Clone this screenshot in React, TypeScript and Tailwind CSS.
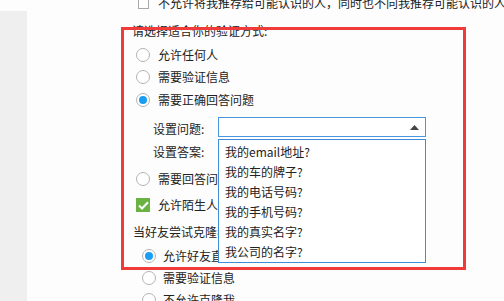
import React from "react";

function Radio({ checked = false }: { checked?: boolean }) {
  return (
    <span className="relative flex h-[14px] w-[14px] shrink-0 items-center justify-center rounded-full border border-[#b4b4b4] bg-white">
      {checked && <span className="h-[8px] w-[8px] rounded-full bg-[#1a9df2]" />}
    </span>
  );
}

function GreenCheck() {
  return (
    <span className="flex h-[14px] w-[14px] shrink-0 items-center justify-center bg-[#6ab343]">
      <svg width="11" height="9" viewBox="0 0 11 9" fill="none">
        <path d="M1 4.5 L4 7.5 L10 1.2" stroke="#fff" strokeWidth="2" />
      </svg>
    </span>
  );
}

const questions = [
  "我的email地址?",
  "我的车的牌子?",
  "我的电话号码?",
  "我的手机号码?",
  "我的真实名字?",
  "我公司的名字?",
];

export default function App() {
  return (
    <div className="relative flex h-[301px] w-[504px] overflow-hidden bg-[#fdfdfd] font-['Noto_Sans_CJK_SC','Microsoft_YaHei',sans-serif] text-[12px] leading-none text-[#222]">
      <div className="w-[27px] shrink-0 pt-[11px]">
        <div className="h-full bg-[#efefef]" />
      </div>
      <div className="flex min-w-0 flex-1 flex-col pl-[105px] -mt-[8px] *:shrink-0">
        <div className="flex h-[22px] items-center whitespace-nowrap pl-[6px]">
          <span className="mr-[9px] h-[11px] w-[11px] shrink-0 border border-[#a8a8a8] bg-white" />
          <span>不允许将我推荐给可能认识的人，同时也不向我推荐可能认识的人</span>
        </div>
        <div className="mt-[6px] flex h-[22px] items-center">请选择适合你的验证方式:</div>
        <div className="mt-[2px] flex h-[22px] items-center gap-[8px] pl-[4px]">
          <Radio />
          <span>允许任何人</span>
        </div>
        <div className="flex h-[22px] items-center gap-[8px] pl-[4px]">
          <Radio />
          <span>需要验证信息</span>
        </div>
        <div className="mt-[1px] flex h-[22px] items-center gap-[8px] pl-[4px]">
          <Radio checked />
          <span>需要正确回答问题</span>
        </div>
        <div className="mt-[5px] flex h-[22px] items-center pl-[21px]">
          <span className="w-[65px] shrink-0 pt-[3px]">设置问题:</span>
          <div className="relative">
            <div className="flex h-[20px] w-[208px] items-center justify-end border border-[#4a97e0] bg-white pr-[6px]">
              <svg width="9" height="5" viewBox="0 0 9 5">
                <path d="M0 5 L4.5 0 L9 5 Z" fill="#444" />
              </svg>
            </div>
            <div className="absolute left-0 top-[22px] z-10 flex h-[124px] w-[208px] flex-col border border-[#3f8ed9] bg-white pt-[2px]">
              {questions.map((q) => (
                <div key={q} className="flex h-[20px] items-center pl-[6px]">
                  {q}
                </div>
              ))}
            </div>
          </div>
        </div>
        <div className="mt-[3px] flex h-[22px] items-center pl-[21px]">设置答案:</div>
        <div className="mt-[5px] flex h-[22px] items-center gap-[8px] whitespace-nowrap pl-[4px]">
          <Radio />
          <span>需要回答问题并由我确认</span>
        </div>
        <div className="mt-[4px] flex h-[22px] items-center gap-[8px] whitespace-nowrap pl-[4px]">
          <GreenCheck />
          <span>允许陌生人查看我的好友</span>
        </div>
        <div className="mt-[5px] flex h-[22px] items-center whitespace-nowrap pl-[1px]">当好友尝试克隆我的好友关系时:</div>
        <div className="mt-[2px] flex h-[22px] items-center gap-[7px] whitespace-nowrap pl-[10px]">
          <Radio checked />
          <span>允许好友直接克隆</span>
        </div>
        <div className="flex h-[22px] items-center gap-[7px] whitespace-nowrap pl-[10px]">
          <Radio />
          <span>需要验证信息</span>
        </div>
        <div className="flex h-[22px] items-center gap-[7px] whitespace-nowrap pl-[10px]">
          <Radio />
          <span>不允许克隆我</span>
        </div>
      </div>
      <div className="pointer-events-none absolute left-[121px] top-[27px] z-20 h-[243px] w-[345px] border-[3px] border-[#f03b3b]" />
    </div>
  );
}
